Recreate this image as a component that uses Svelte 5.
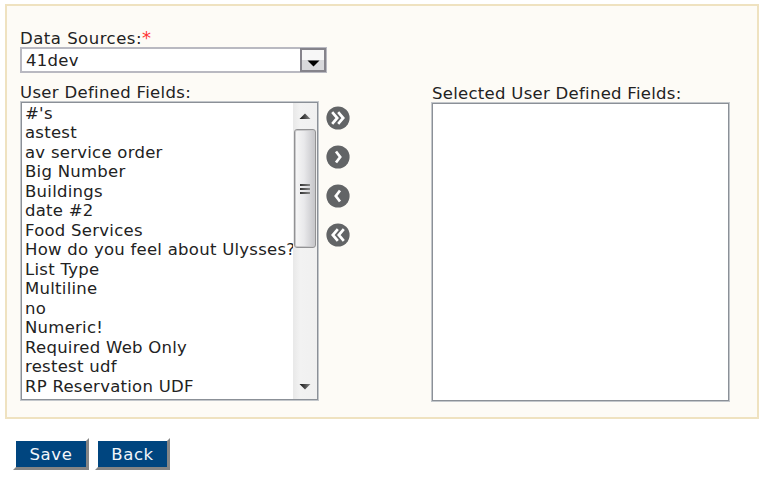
<script>
  const fields = ["#'s", 'astest', 'av service order', 'Big Number', 'Buildings', 'date #2', 'Food Services', 'How do you feel about Ulysses?', 'List Type', 'Multiline', 'no', 'Numeric!', 'Required Web Only', 'restest udf', 'RP Reservation UDF'];
  const moves = [
    { label: 'Add all', paths: ['M6.2 6.2l5 5.8-5 5.8', 'M12.2 6.2l5 5.8-5 5.8'] },
    { label: 'Add', paths: ['M10 6.5l4.2 5.5-4.2 5.5'] },
    { label: 'Remove', paths: ['M14 6.5l-4.2 5.5 4.2 5.5'] },
    { label: 'Remove all', paths: ['M11.8 6.2l-5 5.8 5 5.8', 'M17.8 6.2l-5 5.8 5 5.8'] }
  ];
</script>

<main>
  <section class="panel">
    <div class="left">
      <div class="label">Data Sources:<span class="req">*</span></div>
      <div class="select">
        <span>41dev</span>
        <div class="drop"><svg width="21" height="18" viewBox="0 0 21 18"><path d="M4.5 9.5h12l-6 6z" fill="#000" /></svg></div>
      </div>
      <div class="label second">User Defined Fields:</div>
      <div class="row">
        <div class="list">
          <ul>
            {#each fields as f}<li>{f}</li>{/each}
          </ul>
          <div class="scroll">
            <svg class="cap" width="24" height="26" viewBox="0 0 24 26"><defs><linearGradient id="up" x2="1"><stop stop-color="#111" /><stop offset="1" stop-color="#888" /></linearGradient></defs><path d="M6.5 16h11l-5.5-5.5z" fill="url(#up)" /></svg>
            <div class="thumb"><i></i><i></i><i></i></div>
            <svg class="cap down" width="24" height="26" viewBox="0 0 24 26"><path d="M6.5 11h11l-5.5 5.5z" fill="url(#up)" /></svg>
          </div>
        </div>
        <div class="moves">
          {#each moves as m}
            <button aria-label={m.label}><svg width="24" height="24" viewBox="0 0 24 24"><circle cx="12" cy="12" r="11.6" fill="#626466" />{#each m.paths as d}<path {d} fill="none" stroke="#fff" stroke-width="2.7" />{/each}</svg></button>
          {/each}
        </div>
      </div>
    </div>
    <div class="right">
      <div class="label">Selected User Defined Fields:</div>
      <div class="list empty"></div>
    </div>
  </section>
  <div class="actions"><button>Save</button><button>Back</button></div>
</main>

<style>
  :global(body) { background: #fff; }
  main { box-sizing: border-box; width: 783px; height: 497px; padding: 4px 0 0 5px; overflow: hidden; font: 16.5px/20px "DejaVu Sans", Verdana, sans-serif; letter-spacing: 0.32px; color: #222; }
  .panel { box-sizing: border-box; width: 754px; height: 415px; border: 2px solid #efe2c0; background: #fdfbf6; display: flex; }
  .left { width: 411px; margin-left: 13px; padding-top: 22px; }
  .label { height: 19px; line-height: 21px; white-space: nowrap; }
  .left > .label:first-child { letter-spacing: 0.5px; }
  .req { color: #f33; font-size: 18px; line-height: 1; }
  .select { box-sizing: border-box; width: 307px; height: 26px; border: 2px solid #b9b9c1; background: #fff; display: flex; justify-content: space-between; line-height: 24px; padding-left: 4px; letter-spacing: 0.3px; }
  .drop { box-sizing: border-box; width: 26px; height: 24px; margin: -1px -1px 0 0; border: 2px solid #85838b; background: linear-gradient(#f7f7f7 48%, #d9d9dc 52%); padding: 1px; }
  .drop svg { display: block; }
  .label.second { margin-top: 9px; }
  .row { display: flex; }
  .list { box-sizing: border-box; width: 297px; height: 298px; margin: 1px; border: 1px solid #8b9097; box-shadow: 0 0 0 1px #c3c7cb; background: #fff; display: flex; overflow: hidden; }
  .list.empty { margin-top: 0; }
  ul { list-style: none; margin: 0; padding: 1px 0 0 3px; width: 269px; overflow: hidden; white-space: nowrap; letter-spacing: 0.26px; }
  li { height: 19.47px; line-height: 19.47px; }
  .scroll { width: 24px; background: linear-gradient(90deg, #e8e8e8, #f2f2f2 30%, #f0f0f0); display: flex; flex-direction: column; }
  .cap { display: block; flex: none; }
  .thumb { box-sizing: border-box; width: 22px; height: 119px; margin-left: 1px; border: 1px solid #929294; border-radius: 3px; box-shadow: inset 0 0 0 1px #c9c9cb; background: linear-gradient(90deg, #f7f7f7, #e9e9eb 45%, #c5c5c9); display: flex; flex-direction: column; gap: 2px; align-items: center; justify-content: center; }
  .thumb i { width: 10px; height: 2px; background: linear-gradient(90deg, #333, #888); }
  .down { margin-top: auto; }
  .moves { display: flex; flex-direction: column; gap: 15px; padding: 5px 0 0 7px; }
  .moves button { width: 24px; height: 24px; border: 0; padding: 0; background: none; }
  .moves svg { display: block; }
  .right { padding-top: 78px; }
  .right .label { line-height: 20px; padding-left: 1px; letter-spacing: 0.28px; }
  .actions { display: flex; gap: 6px; padding: 19px 0 0 8px; }
  .actions button { box-sizing: border-box; width: 76px; height: 32px; padding: 1px 0 0; font: inherit; letter-spacing: 0.6px; color: #f2f6fa; background: #00457f; border: 3px solid; border-color: #fff #858585 #858585 #fff; }
  .actions button + button { width: 75px; }
</style>
